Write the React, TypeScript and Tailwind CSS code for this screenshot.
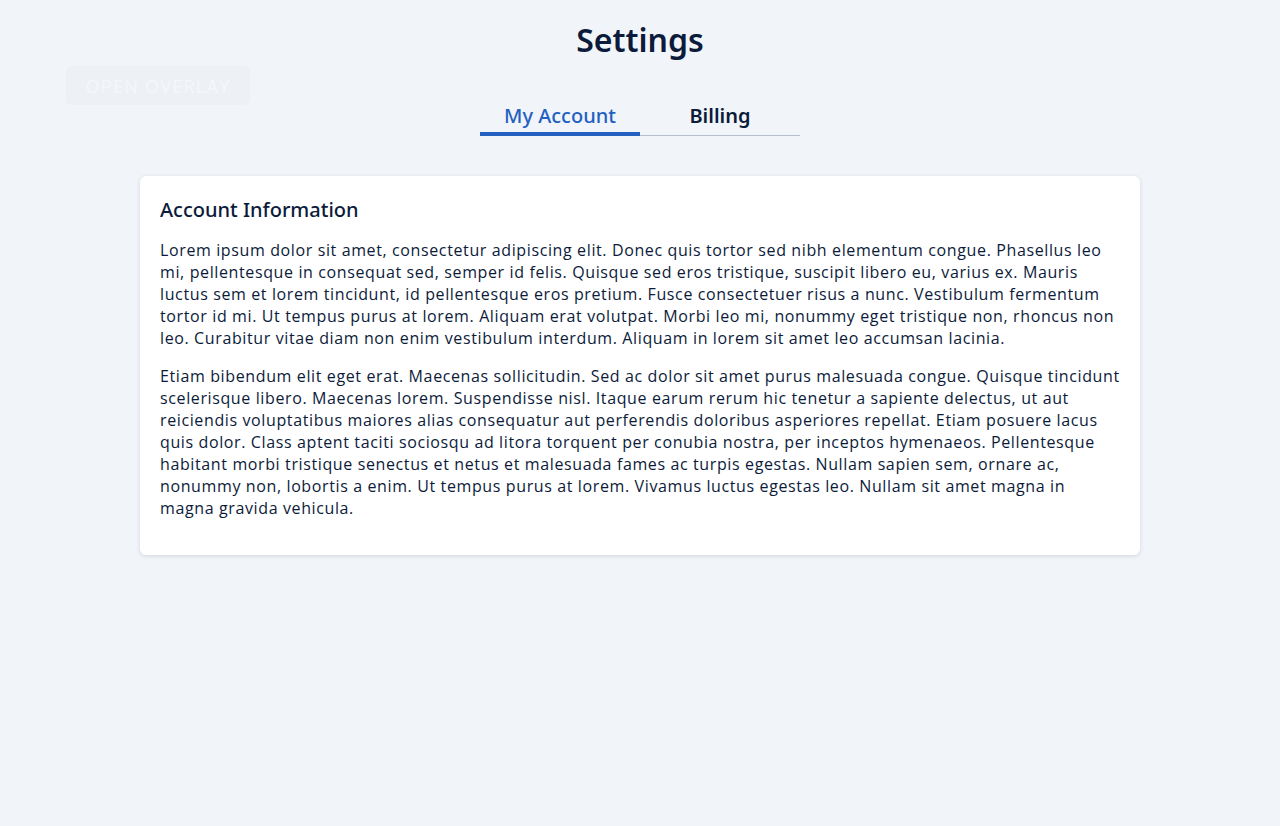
export default function App() {
  return (
    <div className="relative min-h-[826px] bg-[#f1f5f9] text-[#0c1b3a]" style={{ fontFamily: '"Open Sans", sans-serif' }}>
      <button className="absolute left-[66px] top-[66px] h-[39px] w-[184px] rounded-md bg-[#edf1f5] pt-[2px] text-[18px] tracking-[0.07em] text-[#f5f7fa]">
        OPEN OVERLAY
      </button>

      <div className="flex flex-col items-center pt-[18px]">
        <h1 className="text-[32px] font-semibold leading-[44px]" style={{ fontFamily: '"Noto Sans", sans-serif' }}>
          Settings
        </h1>

        <div className="mt-[34px] flex w-[320px]" style={{ fontFamily: '"Noto Sans", sans-serif' }}>
          <div className="flex h-[40px] w-[160px] items-center justify-center border-b-4 border-[#2360c2] pt-[4px] text-[20px] font-medium text-[#2360c2]">
            My Account
          </div>
          <div className="flex h-[40px] w-[160px] items-center justify-center border-b border-[#b8c0cc] pt-[1px] text-[20px] font-semibold">
            Billing
          </div>
        </div>

        <div className="mt-[40px] w-[1000px] rounded-md bg-white px-5 pb-5 pt-5 shadow-[0_1px_4px_rgba(15,27,58,0.14)]">
          <h2 className="mb-[15px] text-[20px] font-medium leading-[28px]" style={{ fontFamily: '"Noto Sans", sans-serif' }}>
            Account Information
          </h2>
          <p className="mb-4 text-[16px] leading-[22px] tracking-[0.62px]">
            Lorem ipsum dolor sit amet, consectetur adipiscing elit. Donec quis tortor sed nibh elementum congue. Phasellus leo mi, pellentesque in consequat sed, semper id felis. Quisque sed eros tristique, suscipit libero eu, varius ex. Mauris luctus sem et lorem tincidunt, id pellentesque eros pretium. Fusce consectetuer risus a nunc. Vestibulum fermentum tortor id mi. Ut tempus purus at lorem. Aliquam erat volutpat. Morbi leo mi, nonummy eget tristique non, rhoncus non leo. Curabitur vitae diam non enim vestibulum interdum. Aliquam in lorem sit amet leo accumsan lacinia.
          </p>
          <p className="mb-4 text-[16px] leading-[22px] tracking-[0.62px]">
            Etiam bibendum elit eget erat. Maecenas sollicitudin. Sed ac dolor sit amet purus malesuada congue. Quisque tincidunt scelerisque libero. Maecenas lorem. Suspendisse nisl. Itaque earum rerum hic tenetur a sapiente delectus, ut aut reiciendis voluptatibus maiores alias consequatur aut perferendis doloribus asperiores repellat. Etiam posuere lacus quis dolor. Class aptent taciti sociosqu ad litora torquent per conubia nostra, per inceptos hymenaeos. Pellentesque habitant morbi tristique senectus et netus et malesuada fames ac turpis egestas. Nullam sapien sem, ornare ac, nonummy non, lobortis a enim. Ut tempus purus at lorem. Vivamus luctus egestas leo. Nullam sit amet magna in magna gravida vehicula.
          </p>
        </div>
      </div>
    </div>
  );
}
